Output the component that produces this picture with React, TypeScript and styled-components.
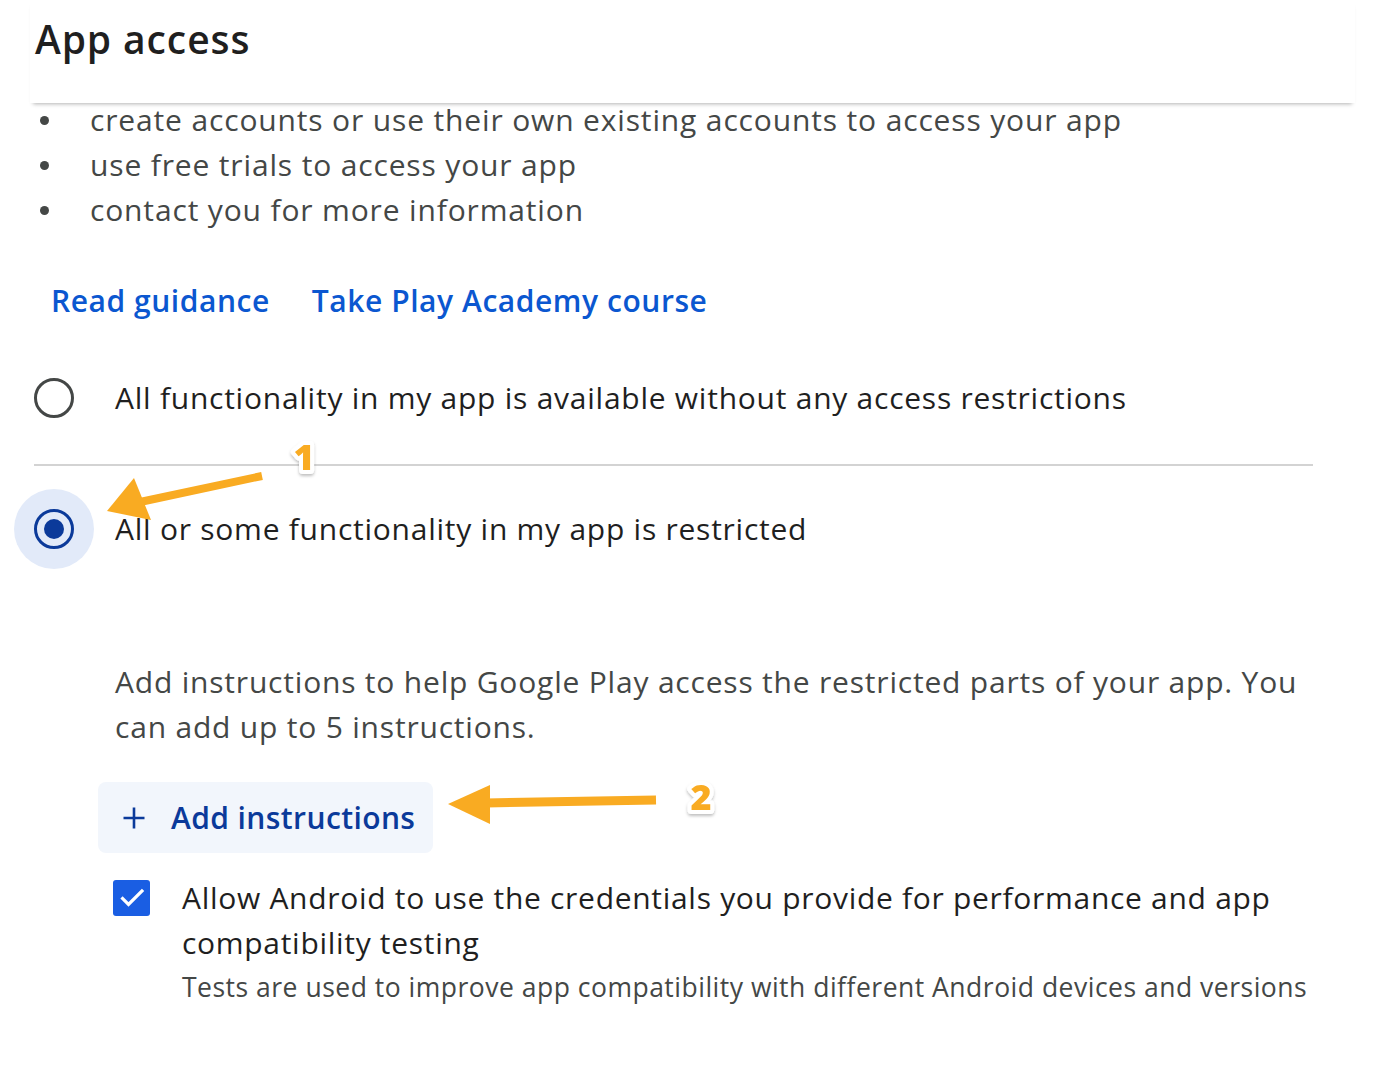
import React from "react";
import styled, { createGlobalStyle } from "styled-components";

const Global = createGlobalStyle`
  html, body { margin: 0; padding: 0; background: #ffffff; }
  body { font-family: "Open Sans", Roboto, Arial, sans-serif; -webkit-font-smoothing: antialiased; }
`;

const Page = styled.div`
  position: relative;
  width: 1392px;
  height: 1068px;
  overflow: hidden;
  background: #fff;
`;

const Header = styled.header`
  position: relative;
  z-index: 2;
  margin: 0 37px 0 30px;
  height: 103px;
  background: #fff;
  box-shadow: 0 4px 4px -3px rgba(0, 0, 0, 0.3);
  padding: 14px 0 0 5px;
  box-sizing: border-box;
`;

const Title = styled.h1`
  margin: 0;
  font-size: 39px;
  line-height: 50px;
  font-weight: 600;
  color: #1f1f1f;
  letter-spacing: 0.9px;
`;

const Content = styled.main`
  position: relative;
  z-index: 1;
  margin-top: -6px;
`;

const Bullets = styled.ul`
  margin: 0;
  padding: 0 0 0 90px;
  list-style: none;
`;

const Bullet = styled.li`
  position: relative;
  font-size: 30px;
  line-height: 45px;
  letter-spacing: 0.85px;
  color: #444746;
  &::before {
    content: "";
    position: absolute;
    left: -50px;
    top: 19px;
    width: 9px;
    height: 9px;
    border-radius: 50%;
    background: #444746;
  }
`;

const Links = styled.div`
  display: flex;
  gap: 42px;
  padding: 47px 0 0 51px;
`;

const Link = styled.a`
  font-size: 30px;
  line-height: 44px;
  font-weight: 600;
  letter-spacing: 0.55px;
  color: #0b57d0;
  text-decoration: none;
`;

const Options = styled.div`
  margin: 9px 79px 0 34px;
`;

const OptionRow = styled.label<{ $divider?: boolean }>`
  display: flex;
  align-items: center;
  height: ${(p) => (p.$divider ? "134px" : "126px")};
  border-bottom: ${(p) => (p.$divider ? "2px solid #d3d3d3" : "none")};
  box-sizing: border-box;
`;

const RadioWrap = styled.span<{ $checked?: boolean }>`
  position: relative;
  flex: none;
  width: 40px;
  height: 40px;
  margin-right: 41px;
  display: flex;
  align-items: center;
  justify-content: center;
  &::before {
    content: "";
    display: ${(p) => (p.$checked ? "block" : "none")};
    position: absolute;
    left: -20px;
    top: -20px;
    width: 80px;
    height: 80px;
    border-radius: 50%;
    background: #e2eaf9;
  }
`;

const RadioRing = styled.span<{ $checked?: boolean }>`
  position: relative;
  box-sizing: border-box;
  width: 40px;
  height: 40px;
  border-radius: 50%;
  border: 3.5px solid ${(p) => (p.$checked ? "#0b3a9a" : "#444746")};
  display: flex;
  align-items: center;
  justify-content: center;
  &::after {
    content: "";
    display: ${(p) => (p.$checked ? "block" : "none")};
    width: 20px;
    height: 20px;
    border-radius: 50%;
    background: #0b3a9a;
  }
`;

const OptionText = styled.span`
  font-size: 30px;
  line-height: 44px;
  letter-spacing: 0.75px;
  color: #1f1f1f;
`;

const Restricted = styled.section`
  padding: 0 77px 0 115px;
  margin-top: 67px;
`;

const Description = styled.p`
  margin: 0;
  font-size: 30px;
  line-height: 45px;
  letter-spacing: 0.8px;
  color: #444746;
`;

const AddButton = styled.button`
  display: flex;
  align-items: center;
  gap: 25px;
  margin: 33px 0 0 -17px;
  width: 335px;
  height: 71px;
  padding: 0 0 0 24px;
  border: none;
  border-radius: 8px;
  background: #f2f6fc;
  font-family: inherit;
  font-size: 30px;
  font-weight: 600;
  letter-spacing: 0.4px;
  color: #0b3a9a;
  cursor: pointer;
`;

const CheckRow = styled.div`
  display: flex;
  gap: 32px;
  margin-top: 22px;
  margin-left: -2px;
`;

const CheckBox = styled.span`
  flex: none;
  width: 37px;
  height: 36px;
  margin-top: 5px;
  border-radius: 3px;
  background: #1a5ee3;
  display: flex;
  align-items: center;
  justify-content: center;
`;

const CheckLabel = styled.div`
  display: flex;
  flex-direction: column;
`;

const CheckMain = styled.span`
  font-size: 30px;
  line-height: 45px;
  letter-spacing: 0.7px;
  color: #1f1f1f;
`;

const CheckSub = styled.span`
  font-size: 26.5px;
  line-height: 40px;
  letter-spacing: 0.5px;
  color: #444746;
  margin-top: 2px;
  white-space: nowrap;
`;

const Overlay = styled.svg`
  position: absolute;
  left: 0;
  top: 0;
  z-index: 5;
  pointer-events: none;
`;

const Marker = styled.text`
  font-family: "Open Sans", Roboto, Arial, sans-serif;
  font-weight: 800;
  font-size: 36px;
  fill: #f9ab22;
  stroke: #ffffff;
  stroke-width: 8px;
  stroke-linejoin: round;
  paint-order: stroke;
`;

export default function App() {
  return (
    <Page>
      <Global />
      <Header>
        <Title>App access</Title>
      </Header>
      <Content>
        <Bullets>
          <Bullet>create accounts or use their own existing accounts to access your app</Bullet>
          <Bullet>use free trials to access your app</Bullet>
          <Bullet>contact you for more information</Bullet>
        </Bullets>
        <Links>
          <Link href="#">Read guidance</Link>
          <Link href="#">Take Play Academy course</Link>
        </Links>
        <Options>
          <OptionRow $divider>
            <RadioWrap>
              <RadioRing />
            </RadioWrap>
            <OptionText>All functionality in my app is available without any access restrictions</OptionText>
          </OptionRow>
          <OptionRow>
            <RadioWrap $checked>
              <RadioRing $checked />
            </RadioWrap>
            <OptionText>All or some functionality in my app is restricted</OptionText>
          </OptionRow>
        </Options>
        <Restricted>
          <Description>
            Add instructions to help Google Play access the restricted parts of your app. You can add up to 5 instructions.
          </Description>
          <AddButton>
            <svg width="24" height="24" viewBox="0 0 24 24">
              <path d="M12 1.5v21M1.5 12h21" stroke="#0b3a9a" strokeWidth="2.6" fill="none" />
            </svg>
            Add instructions
          </AddButton>
          <CheckRow>
            <CheckBox>
              <svg width="28" height="28" viewBox="0 0 24 24">
                <path d="M4 12.5l5 5L20.5 6" stroke="#fff" strokeWidth="2.8" fill="none" strokeLinecap="square" />
              </svg>
            </CheckBox>
            <CheckLabel>
              <CheckMain>Allow Android to use the credentials you provide for performance and app compatibility testing</CheckMain>
              <CheckSub>Tests are used to improve app compatibility with different Android devices and versions</CheckSub>
            </CheckLabel>
          </CheckRow>
        </Restricted>
      </Content>
      <Overlay width="1392" height="1068" viewBox="0 0 1392 1068">
        <defs>
          <filter id="sh" x="-50%" y="-50%" width="200%" height="200%">
            <feDropShadow dx="0" dy="2" stdDeviation="1.5" floodColor="#000" floodOpacity="0.25" />
          </filter>
        </defs>
        <line x1="262" y1="476" x2="140" y2="502" stroke="#f9ab22" strokeWidth="8" strokeLinecap="butt" />
        <polygon points="107,511 134,478 151,520" fill="#f9ab22" />
        <g filter="url(#sh)">
          <Marker x="304" y="470" textAnchor="middle">1</Marker>
        </g>
        <line x1="656" y1="800" x2="486" y2="803" stroke="#f9ab22" strokeWidth="9" strokeLinecap="butt" />
        <polygon points="448,804 490,785 490,824" fill="#f9ab22" />
        <g filter="url(#sh)">
          <Marker x="701" y="810" textAnchor="middle">2</Marker>
        </g>
      </Overlay>
    </Page>
  );
}
